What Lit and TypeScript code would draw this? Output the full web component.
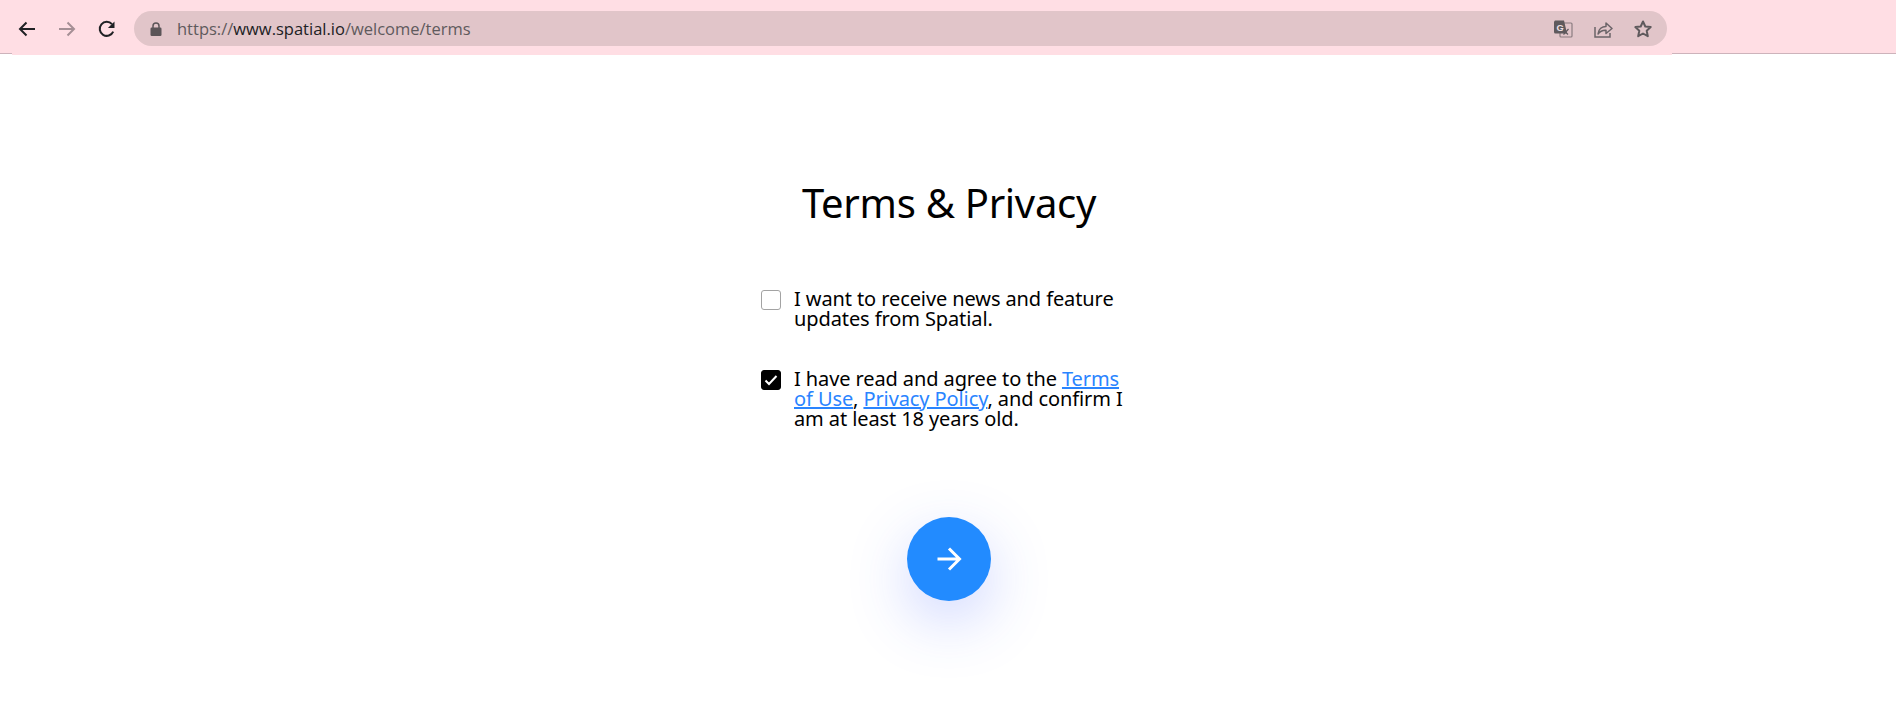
import { LitElement, css, html } from 'lit'
import { customElement } from 'lit/decorators.js'

@customElement('app-root')
export class AppRoot extends LitElement {
  render() {
    return html`
      <div class="toolbar">
        <div class="tab">
          <svg class="nav first" width="20" height="20" viewBox="0 0 20 20">
            <path d="M18 10H3M9.5 3.5 3 10l6.5 6.5" fill="none" stroke="#202124" stroke-width="2" />
          </svg>
          <svg class="nav muted" width="20" height="20" viewBox="0 0 20 20">
            <path d="M2 10h15M10.5 3.5 17 10l-6.5 6.5" fill="none" stroke="#a58f95" stroke-width="2" />
          </svg>
          <svg class="nav" width="20" height="20" viewBox="0 0 20 20">
            <path d="M16.2 12.6A7 7 0 1 1 15 5.2" fill="none" stroke="#202124" stroke-width="2" />
            <path d="M17.5 2.5v6.600h-6.600z" fill="#202124" />
          </svg>
          <div class="omnibox">
            <svg class="lock" width="12" height="14" viewBox="0 0 12 14">
              <path d="M3 6V4a3 3 0 0 1 6 0v2" fill="none" stroke="#5b5558" stroke-width="1.500" />
              <rect x="0.500" y="5.500" width="11" height="8.500" rx="1.200" fill="#5b5558" />
            </svg>
            <span class="url">https://<b>www.spatial.io</b>/welcome/terms</span>
            <svg class="action" width="20" height="20" viewBox="0 0 20 20">
              <rect x="7" y="4" width="12" height="14" rx="1" fill="none" stroke="#8b7c80" stroke-width="1.200" />
              <path d="M2 1.500h9l3 13H2.500A1.500 1.500 0 0 1 1 13V2.500z" fill="#5f5a5d" />
              <text x="3.500" y="11.500" font-family="Liberation Sans" font-size="9.500" font-weight="700" fill="#f0e2e5">G</text>
              <path d="M10 10.500l5 5M15.500 10l-5 5.500" stroke="#5f5a5d" stroke-width="1.200" />
            </svg>
            <svg class="action" width="20" height="20" viewBox="0 0 20 20">
              <path d="M2 8v10h15v-4" fill="none" stroke="#6b6468" stroke-width="1.500" />
              <path d="M5 15c.5-5 4-7.500 8-7.500V4l6 5.500-6 5v-3.300c-3.500-.2-6 1-8 3.800z" fill="none" stroke="#6b6468" stroke-width="1.500" stroke-linejoin="round" />
            </svg>
            <svg class="action last" width="20" height="20" viewBox="0 0 20 20">
              <path d="M10 2.500l2.300 5 5.400.6-4 3.700 1.100 5.400-4.800-2.700-4.800 2.700 1.100-5.400-4-3.700 5.400-.6z" fill="none" stroke="#5f5a5d" stroke-width="2" stroke-linejoin="round" />
            </svg>
          </div>
        </div>
      </div>
      <main>
        <h1>Terms &amp; Privacy</h1>
        <label class="row">
          <span class="box"></span>
          <span>I want to receive news and feature updates from Spatial.</span>
        </label>
        <label class="row second">
          <span class="box checked">
            <svg width="14" height="12" viewBox="0 0 14 12">
              <path d="M1.500 6.500 5 10l7.500-8" fill="none" stroke="#fff" stroke-width="2" />
            </svg>
          </span>
          <span>I have read and agree to the <a href="#">Terms of Use</a>, <a href="#">Privacy Policy</a>, and confirm I am at least 18 years old.</span>
        </label>
        <button aria-label="Next">
          <svg width="26" height="26" viewBox="0 0 26 26">
            <path d="M1.500 13h22M13 2.500 23.500 13 13 23.500" fill="none" stroke="#fff" stroke-width="3" />
          </svg>
        </button>
      </main>
    `
  }

  static styles = css`
    :host {
      display: block;
      height: 727px;
      overflow: hidden;
      background: #fff;
      font-family: 'Noto Sans', sans-serif;
      color: #000;
    }

    .toolbar {
      height: 53px;
      background: #ffdee4;
      border-bottom: 1px solid #cdb3bb;
    }

    .tab {
      display: flex;
      align-items: center;
      box-sizing: border-box;
      width: 1660px;
      height: 55px;
      margin-left: 12px;
      padding-top: 2px;
      background: #ffdee4;
      position: relative;
    }

    .nav {
      margin-right: 20px;
    }

    .nav.first {
      margin-left: 5px;
    }

    .omnibox {
      display: flex;
      align-items: center;
      width: 1533px;
      height: 35px;
      margin-left: -3px;
      border-radius: 18px;
      background: #e1c5c9;
    }

    .lock {
      margin-left: 16px;
    }

    .url {
      flex: 1;
      margin-left: 15px;
      font-family: 'Open Sans', sans-serif;
      font-size: 16.500px;
      color: #5f5a5d;
    }

    .url b {
      font-weight: 400;
      color: #202124;
    }

    .action {
      margin-left: 20px;
    }

    .action.last {
      margin-right: 14px;
    }

    main {
      display: flex;
      flex-direction: column;
      align-items: center;
      padding-left: 2px;
    }

    h1 {
      margin: 123px 0 0;
      font-size: 40px;
      line-height: 52px;
      font-weight: 400;
      letter-spacing: -0.3px;
    }

    .row {
      display: flex;
      gap: 13px;
      box-sizing: border-box;
      width: 372px;
      margin-left: -4px;
      font-size: 20px;
      line-height: 20px;
      letter-spacing: -0.1px;
    }

    .row:first-of-type {
      margin-top: 60px;
    }

    .row.second {
      margin-top: 40px;
    }

    .box {
      flex: none;
      display: grid;
      place-content: center;
      box-sizing: border-box;
      width: 20px;
      height: 20px;
      margin-top: 1px;
      border: 1px solid #a3a3a3;
      border-radius: 3px;
    }

    .box.checked {
      border-color: #000;
      background: #000;
    }

    a {
      color: #2a84ff;
    }

    button {
      display: grid;
      place-content: center;
      width: 84px;
      height: 84px;
      margin-top: 88px;
      padding: 0;
      border: none;
      border-radius: 50%;
      background: #228bff;
      box-shadow: 0 20px 60px rgba(60, 90, 255, 0.25);
    }
  `
}

declare global {
  interface HTMLElementTagNameMap {
    'app-root': AppRoot
  }
}
